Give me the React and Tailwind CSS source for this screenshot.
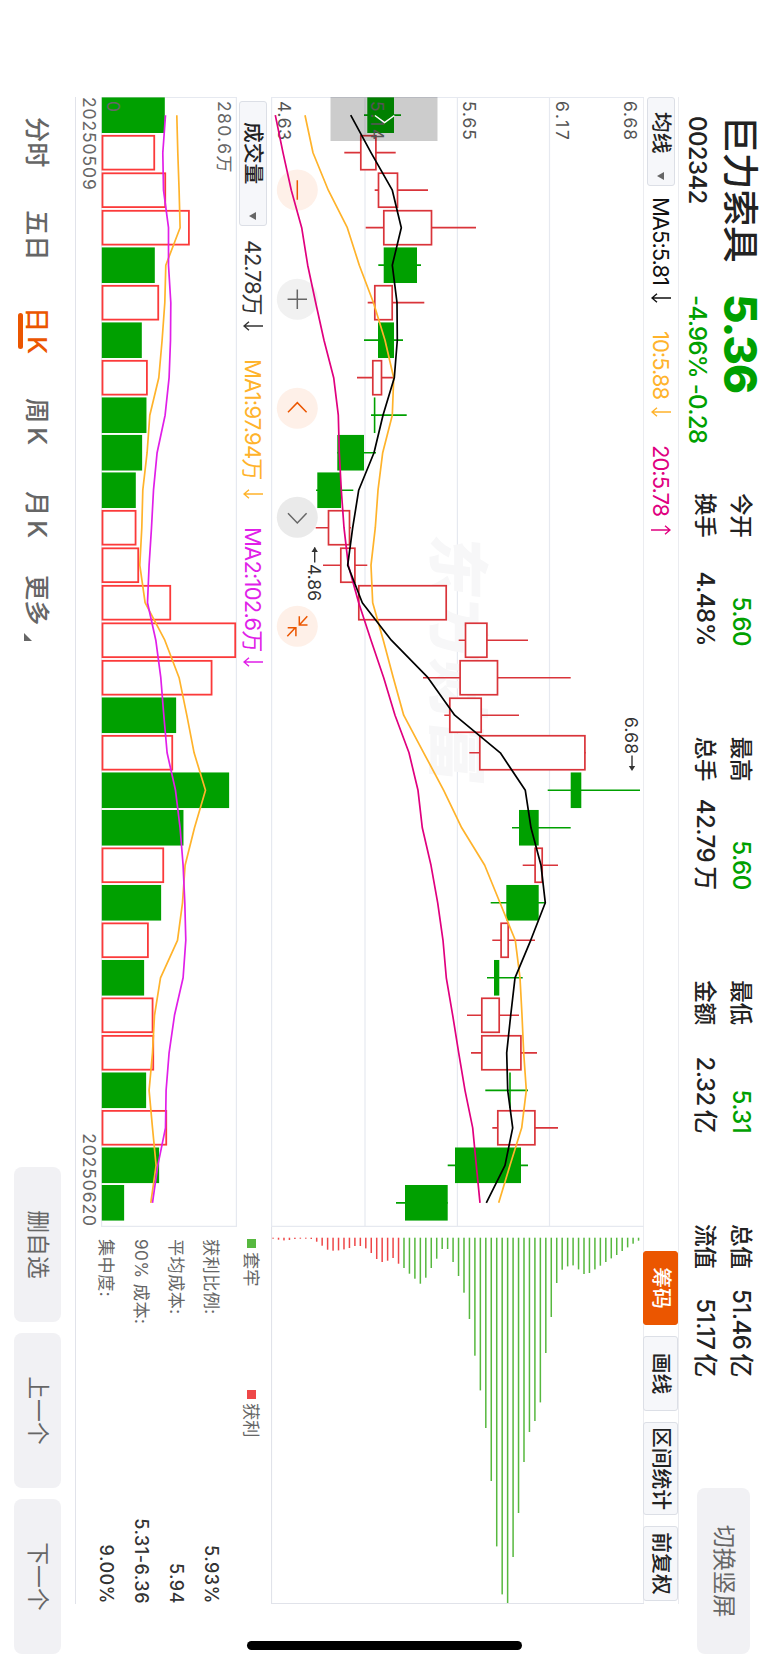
import React from "react";

const GREEN = "#00a000";
const RED = "#d9343a";

// [type, low, bodyLow, bodyHigh, high]
const candles = [
  ["g", 364, 367.3, 394, 401],
  ["r", 344.3, 360, 376.7, 395.7],
  ["r", 374.7, 377.7, 398.3, 428],
  ["r", 365.7, 383, 432.3, 476],
  ["g", 378.3, 383.7, 417, 421],
  ["r", 367.7, 374, 393, 424.3],
  ["g", 364, 378, 394, 403],
  ["r", 357, 372, 382.3, 394.3],
  ["g", 371, 373.8, 375.4, 406.7],
  ["g", 337.3, 337.3, 364, 376],
  ["g", 316, 317.3, 341, 353.3],
  ["r", 315.7, 327.7, 350.3, 351],
  ["r", 323, 340, 355.7, 367.3],
  ["r", 358, 358, 447, 447],
  ["r", 458.7, 464.7, 487.7, 528],
  ["r", 423, 459.3, 498.3, 570.7],
  ["r", 444.3, 449, 482, 519],
  ["r", 469.3, 479, 585.7, 585.7],
  ["g", 547.7, 570.7, 581.3, 640],
  ["g", 512, 519, 538.7, 570.7],
  ["r", 522.7, 534.3, 543, 558],
  ["g", 490.7, 506.3, 538.7, 545.3],
  ["r", 492.3, 500.3, 509, 535],
  ["g", 487, 494, 499.3, 522.7],
  ["r", 467, 481, 500, 519],
  ["r", 471, 481, 521.7, 537],
  ["g", 485.3, 509.2, 510.8, 528],
  ["r", 492.3, 497, 535.7, 558],
  ["g", 447.7, 455, 521, 528],
  ["g", 396, 405, 447.7, 447.7],
];

const ma5 = [
  350.7, 371, 392.3, 401.3, 392.3, 397, 397.3, 394.3, 383, 374, 358.7, 352.7,
  347.7, 362.3, 391.3, 428, 454.7, 500.3, 525.3, 531, 541, 545.3, 530.7, 515,
  510.7, 506.7, 507.7, 512.7, 505, 486.3,
];
const ma10 = [
  305, 313, 328.3, 347.3, 359.3, 373.5, 385, 393.7, 392.3, 382.7, 378, 375.3,
  371, 372.7, 383.3, 393.3, 403.7, 423.7, 443.7, 461.7, 484.7, 500, 515.3, 520,
  522, 523.7, 526.3, 521.7, 510, 498.7,
];
const ma20 = [
  275.3, 283, 291.3, 301.7, 307.7, 315.7, 324, 333.7, 338.3, 339.3, 341.3, 344,
  348.3, 358.7, 371, 383.7, 395, 409, 418, 422.3, 431, 437.7, 443, 446.3, 452.7,
  458.7, 465, 472.7, 476.3, 480,
];

const volumes = [
  494, 465, 498, 569, 464, 477, 425, 443, 439, 426, 407, 409, 417, 513, 708,
  637, 528, 519, 687, 550, 492, 483, 446, 432, 460, 462, 438, 501, 477, 372,
];
// same colours as the candles, except one day that closed below its previous close
const volumeTypes = candles.map(([type], i) => (i === 16 ? "g" : type));
const volMa1 = [
  530, 533, 537, 540, 497, 494, 486, 476, 449, 441, 428, 425, 419, 435, 494,
  537, 560, 582, 616, 583, 555, 547, 532, 481, 463, 457, 447, 457, 468, 452,
];
const volMa2 = [
  496, 488, 490, 505, 505, 512, 511, 507, 495, 471, 460, 454, 447, 442, 467,
  482, 491, 501, 526, 540, 549, 554, 557, 549, 523, 507, 498, 496, 473, 457,
];

// chip distribution, highest price first
const chips = [
  3, 6, 9.7, 13.3, 17.3, 20.7, 24.3, 28, 31.7, 35.3, 36.3, 31.7, 27.7, 28.7,
  32, 45.3, 79.3, 115.3, 164.7, 183.3, 194.3, 224.3, 275.3, 319.3, 365.3,
  356.7, 308.7, 243.3, 190.3, 152.7, 118, 81.3, 55, 38.3, 24.3, 11.3, 11.3, 21,
  30.3, 40, 46, 41, 36, 30.3, 26, 20.3, 23, 24.3, 21.3, 15.3, 10.7, 8.3, 8.3,
  10.3, 11.7, 12.7, 13, 12, 8, 4, 1.3, 1, 1, 1.3, 2.3, 2.7, 2, 1,
];
const FIRST_RED_CHIP = 44;

const STEP = 37.503;
const cx = (i) => 18.2 + i * STEP;
const py = (v) => 644 - v;
const vy = (v) => 135.2 - (v - 305) / 3;

const points = (values, scale) =>
  values.map((v, i) => `${cx(i).toFixed(1)},${scale(v).toFixed(1)}`).join(" ");

const quotes = [
  { a: "今开", av: "5.60", b: "换手", bv: "4.48%" },
  { a: "最高", av: "5.60", b: "总手", bv: "42.79", unit: "万" },
  { a: "最低", av: "5.31", b: "金额", bv: "2.32", unit: "亿" },
  { a: "总值", av: "51.46", b: "流值", bv: "51.17", unit: "亿", plain: true },
];

const Header = () => (
  <header className="flex h-[89px] shrink-0 text-[#222]">
    <div className="ml-[19px] w-[179px]">
      <div className="mt-[5px] h-[45px] text-[36.7px] leading-[46px] font-medium whitespace-nowrap">
        巨力索具
      </div>
      <div className="mt-[6px] h-[30px] text-[24px] leading-[30px] font-medium tracking-[-0.6px]">
        002342
      </div>
    </div>
    <div className="w-[198px] text-[#00a000]">
      <div className="mt-[4px] h-[46px] text-[45.5px] leading-[47px] font-extrabold tracking-[-1.2px] -ml-px">
        5.36
      </div>
      <div className="mt-[6px] h-[30px] text-[24px] leading-[30px] font-medium tracking-[-0.7px] whitespace-nowrap">
        -4.96% -0.28
      </div>
    </div>
    <div className="flex w-[884px] justify-between">
      {quotes.map((q) => (
        <div key={q.a} className="w-[153px] pt-[9px] text-[24px] font-medium tracking-[-0.5px]">
          <div className="flex h-[36px] items-center justify-between">
            <span className="text-[22.6px] tracking-[-0.3px]">{q.a}</span>
            <span className={q.plain ? "" : "text-[#00a000]"}>
              {q.av}
              {q.plain && <span className="ml-[4px]">{q.unit}</span>}
            </span>
          </div>
          <div className="flex h-[35px] items-center justify-between">
            <span className="text-[22.6px] tracking-[-0.3px]">{q.b}</span>
            <span>
              {q.bv}
              {q.unit && <span className="ml-[4px]">{q.unit}</span>}
            </span>
          </div>
        </div>
      ))}
    </div>
    <button className="mt-[18px] ml-[111px] h-[53px] w-[166px] rounded-lg bg-[#f1f1f4] text-[23.2px] text-[#666]">
      切换竖屏
    </button>
  </header>
);

const Trend = ({ up }) => (
  <svg width="10" height="20" viewBox="0 0 10 20" fill="none" stroke="currentColor" strokeWidth="1.4">
    {up ? <path d="M5 20V1M0.7 6L5 1l4.3 5" /> : <path d="M5 0v19M0.7 14L5 19l4.3-5" />}
  </svg>
);

const Dropdown = ({ label, className }) => (
  <button
    className={`flex h-[28px] items-center justify-between rounded-[3px] border border-[#dcdfe6] bg-[#f6f7fa] text-[20.8px] font-medium text-[#222] ${className}`}
  >
    <span>{label}</span>
    <svg width="8" height="7" viewBox="0 0 8 7">
      <path d="M0 0h8L4 7z" fill="#666" />
    </svg>
  </button>
);

const Average = ({ text, width, color, up }) => (
  <span className={`flex items-center justify-between ${width} ${color}`}>
    {text}
    <Trend up={up} />
  </span>
);

const tools = [
  { label: "筹码", width: "w-[74px]", active: true },
  { label: "画线", width: "w-[75px]" },
  { label: "区间统计", width: "w-[93px]" },
  { label: "前复权", width: "w-[75px]" },
];

const Toolbar = () => (
  <div className="flex h-[36px] w-[1507px] shrink-0 items-center border-y border-[#ebecf0]">
    <Dropdown label="均线" className="w-[89px] pr-[5px] pl-[14px]" />
    <div className="ml-[11px] flex gap-[28px] text-[22px] tracking-[-1px] whitespace-nowrap">
      <Average text="MA5:5.81" width="w-[106px]" color="text-[#111]" />
      <Average text="10:5.88" width="w-[86px]" color="text-[#ffb32b]" />
      <Average text="20:5.78" width="w-[90px]" color="text-[#e0007f]" up />
    </div>
    <div className="ml-auto flex gap-[11px] pr-[3px]">
      {tools.map((t) => (
        <button
          key={t.label}
          className={`h-[35px] rounded-[3px] border text-[20.8px] font-medium whitespace-nowrap ${t.width} ${
            t.active
              ? "border-[#eb5600] bg-[#eb5600] text-white"
              : "border-[#dcdfe6] bg-[#f6f7fa] text-[#222]"
          }`}
        >
          {t.label}
        </button>
      ))}
    </div>
  </div>
);

const axisLabels = [
  ["6.68", 14.5],
  ["6.17", 82.5],
  ["5.65", 175.5],
  ["5.14", 267.5],
  ["4.63", 360.5],
];

const PriceChart = () => (
  <svg width="1130" height="373" viewBox="0 0 1130 373" className="-mt-px block">
    <g stroke="#e6e9f0" strokeWidth="1.2" fill="none">
      <path d="M0 94.5H1129M0 186.6H1129M0 279H1129M0 372.4H1129M0.5 0V373M1129.4 0V373" />
    </g>
    <text
      x="440"
      y="209"
      textLength="248"
      fontSize="62"
      fontWeight="900"
      fill="#f7f7f8"
      transform="translate(22 0) skewX(-7)"
    >
      东方财富
    </text>
    {candles.map(([type, low, b0, b1, high], i) => {
      const color = type === "g" ? GREEN : RED;
      const x = cx(i);
      return (
        <g key={i} stroke={color} strokeWidth="1.7">
          <line x1={x} x2={x} y1={py(high)} y2={py(low)} />
          {type === "g" ? (
            <rect x={x - 17.8} y={py(b1)} width="35.6" height={b1 - b0} fill={color} stroke="none" />
          ) : (
            <rect x={x - 17} y={py(b1) + 0.8} width="34" height={b1 - b0 - 1.6} fill="#fff" />
          )}
        </g>
      );
    })}
    <rect x="0" y="206.5" width="44" height="107" fill="#000" fillOpacity="0.2" />
    <g fontSize="17.5" fill="#555">
      {axisLabels.map(([t, y]) => (
        <text key={t} x="4" y={y + 6} textLength="39">
          {t}
        </text>
      ))}
    </g>
    <g fill="none" strokeWidth="1.5">
      <circle cx="93" cy="346.7" r="20.5" fill="#fef0e8" />
      <circle cx="202.3" cy="346.7" r="20.5" fill="#f1f1f1" />
      <circle cx="311.3" cy="346.7" r="20.5" fill="#fef0e8" />
      <circle cx="420.3" cy="346.7" r="20.5" fill="#eaeaea" />
      <circle cx="529.3" cy="346.7" r="20.5" fill="#fef0e8" />
      <path d="M83.3 346.7h19.4" stroke="#eb5600" />
      <path d="M192.6 346.7H212M202.3 337V356.4" stroke="#666" />
      <path d="M315.3 337.4l-9.6 9.3 9.6 9.3" stroke="#eb5600" />
      <path d="M416.3 337.4l9.6 9.3-9.6 9.3" stroke="#666" />
      <path
        d="M519.3 336.7l8.6 8M519.3 344.7h8.8v-8.2M539.3 356.7l-8.6-8M539.3 348.1h-8.6v8.2"
        stroke="#eb5600"
      />
    </g>
    <path d="M18.5 249.7l7 9.7-7 9.7" fill="none" stroke="#fff" strokeWidth="1.5" />
    <g fill="none" strokeWidth="1.7" strokeLinejoin="round">
      <polyline points={points(ma20, py)} stroke="#e0007f" />
      <polyline points={points(ma10, py)} stroke="#ffb32b" />
      <polyline points={points(ma5, py)} stroke="#000" />
    </g>
    <g fontSize="17.5" fill="#333">
      <text x="620" y="19" textLength="37">6.68</text>
      <text x="467" y="336" textLength="37">4.86</text>
      <path d="M658.5 12h13M450.5 329.3h15" stroke="#333" strokeWidth="1.4" />
      <path d="M674 12l-5-3.2v6.4zM450 329.3l5-3.2v6.4z" />
    </g>
  </svg>
);

const VolumeHeader = () => (
  <div className="flex h-[34px] items-center pt-[2px] pl-[4px] text-[22px] tracking-[-0.8px] whitespace-nowrap">
    <Dropdown label="成交量" className="w-[125px] pr-[5px] pl-[20px] tracking-normal" />
    <div className="ml-[14px] flex gap-[28px]">
      <Average text="42.78万" width="w-[91px] tracking-[-1.2px]" color="text-[#333]" />
      <Average text="MA1:97.94万" width="w-[140px]" color="text-[#ffb32b]" />
      <Average text="MA2:102.6万" width="w-[140px]" color="text-[#e01fe8]" />
    </div>
  </div>
);

const VolumeChart = () => (
  <svg width="1130" height="136" viewBox="0 0 1130 136" className="block">
    <path d="M0 0.6H1129.4V135.4H0M0.5 0V136" fill="none" stroke="#e6e9f0" strokeWidth="1.2" />
    {volumes.map((v, i) =>
      volumeTypes[i] === "g" ? (
        <rect key={i} x={cx(i) - 17.8} y={vy(v)} width="35.6" height={135.2 - vy(v)} fill={GREEN} />
      ) : (
        <rect
          key={i}
          x={cx(i) - 16.9}
          y={vy(v) + 0.9}
          width="33.8"
          height={133.6 - vy(v)}
          fill="#fff"
          stroke="#fb3a3a"
          strokeWidth="1.8"
        />
      )
    )}
    <g fontSize="17.5" fill="#666">
      <text x="4" y="19" textLength="53">280.6</text>
      <text x="58.5" y="19" fontSize="17">万</text>
      <text x="4" y="130.5">0</text>
    </g>
    <g fill="none" strokeWidth="1.7" strokeLinejoin="round">
      <polyline points={points(volMa1, vy)} stroke="#ffb32b" />
      <polyline points={points(volMa2, vy)} stroke="#e01fe8" />
    </g>
  </svg>
);

const ChipChart = () => (
  <svg width="377" height="373" viewBox="0 0 377 373" className="-mt-px block">
    <path d="M0 372.5H376.5V0" fill="none" stroke="#e1e3ea" strokeWidth="1.2" />
    {chips.map((len, i) => (
      <rect
        key={i}
        x="10.7"
        y={4.7 + i * 5.455}
        width={len}
        height="1.5"
        fill={i < FIRST_RED_CHIP ? "#57b83f" : "#ee4748"}
      />
    ))}
  </svg>
);

const stats = [
  ["获利比例:", "5.93%"],
  ["平均成本:", "5.94"],
  ["90% 成本:", "5.31-6.36"],
  ["集中度:", "9.00%"],
];

const ChipStats = () => (
  <div className="pl-[12px] text-[17.2px] text-[#666]">
    <div className="flex h-[39px] items-center">
      <span className="flex w-[151px] items-center gap-[4px]">
        <i className="size-[9px] bg-[#57b83f]" />
        套牢
      </span>
      <span className="flex items-center gap-[4px]">
        <i className="size-[9px] bg-[#ee4748]" />
        获利
      </span>
    </div>
    <div className="pt-[3px]">
      {stats.map(([label, value]) => (
        <div key={label} className="flex h-[35px] items-center justify-between">
          <span className="tracking-[0.4px]">{label}</span>
          <span className="text-[18px] font-medium tracking-[0.5px] text-[#333]">{value}</span>
        </div>
      ))}
    </div>
  </div>
);

const periods = [
  { label: "分时", width: "w-[93px]" },
  { label: "五日", width: "w-[97px]" },
  { label: "日", k: true, width: "w-[91px]", active: true },
  { label: "周", k: true, width: "w-[93px]" },
  { label: "月", k: true, width: "w-[84px]" },
  { label: "更多", width: "w-[70px]", more: true },
];

const Footer = () => (
  <footer className="flex h-[76px] w-[1507px] shrink-0 border-t border-[#e1e3ea]">
    <nav className="flex pt-[20px] pl-[20px] text-[25.2px] font-medium text-[#666]">
      {periods.map((p) => (
        <div key={p.label} className={`flex items-start ${p.width}`}>
          <span className={`flex flex-col items-center ${p.active ? "text-[#eb5600]" : ""}`}>
            <span className="leading-[36px]">
              {p.label}
              {p.k && <span className="ml-[4px] text-[26px]">K</span>}
            </span>
            {p.active && <i className="-mt-[4px] h-[5px] w-[36px] rounded-full bg-[#eb5600]" />}
          </span>
          {p.more && (
            <svg width="8" height="8" viewBox="0 0 8 8" className="mt-[23px] ml-[8px] shrink-0">
              <path d="M8 0v8H0z" fill="#666" />
            </svg>
          )}
        </div>
      ))}
    </nav>
    <div className="mt-[14px] ml-auto -mr-[50px] flex gap-[11px] text-[22.8px] text-[#666]">
      <button className="h-[47px] w-[155px] rounded-lg bg-[#f1f1f4]">删自选</button>
      <button className="h-[47px] w-[155px] rounded-lg bg-[#f1f1f4]">上一个</button>
      <button className="h-[47px] w-[155px] rounded-lg bg-[#f1f1f4]">下一个</button>
    </div>
  </footer>
);

export default function App() {
  return (
    <div className="h-[1665px] w-[768px] overflow-hidden bg-white">
      <div className="relative flex h-[768px] w-[1665px] origin-top-left translate-x-[768px] rotate-90 flex-col bg-white pl-[97px] font-[Inter,'Noto_Sans_CJK_SC',sans-serif]">
        <Header />
        <Toolbar />
        <main className="flex h-[567px] shrink-0">
          <section className="w-[1130px]">
            <PriceChart />
            <VolumeHeader />
            <VolumeChart />
            <div className="flex h-[24px] items-center justify-between text-[17.5px] tracking-[0.9px] text-[#666]">
              <span>20250509</span>
              <span>20250620</span>
            </div>
          </section>
          <section className="w-[377px]">
            <ChipChart />
            <ChipStats />
          </section>
        </main>
        <Footer />
        <div className="absolute top-[246px] left-[1641px] h-[275px] w-[9px] rounded-full bg-black" />
      </div>
    </div>
  );
}
